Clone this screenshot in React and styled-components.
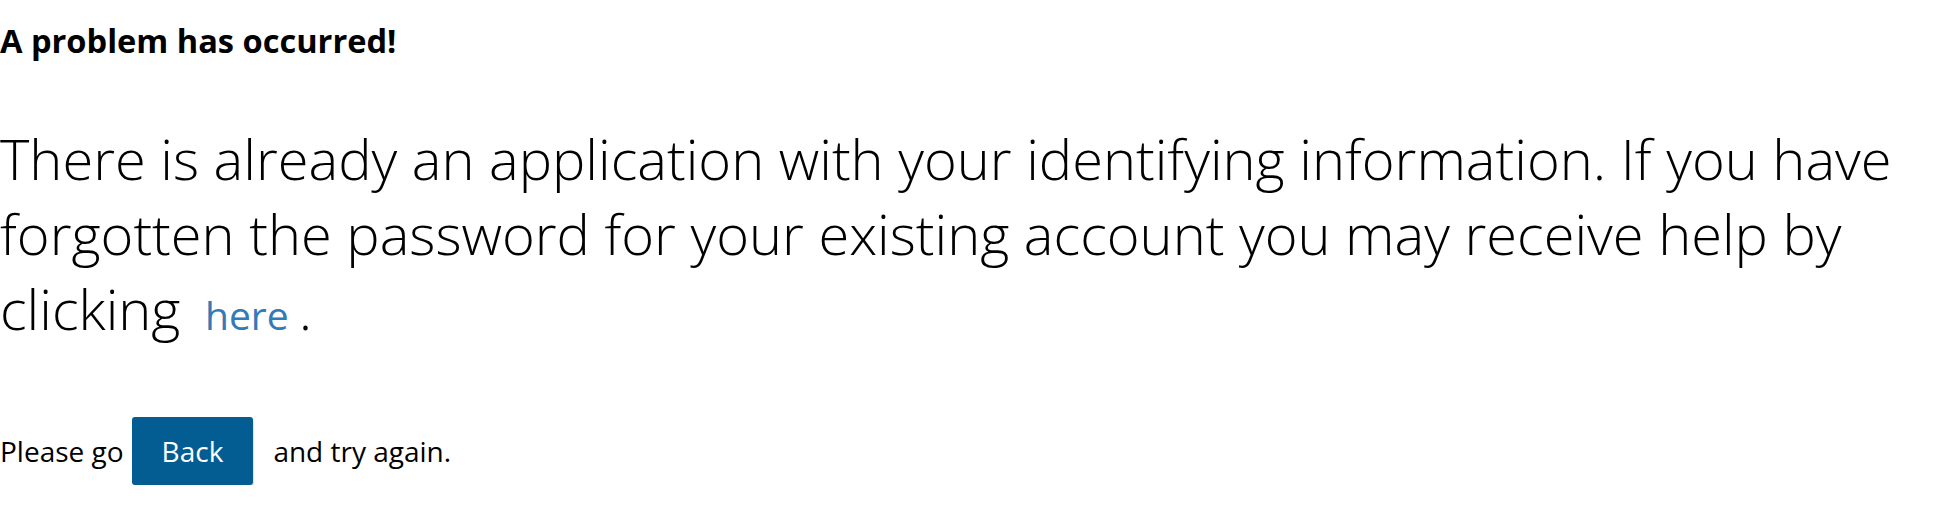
import React from 'react';
import styled, { createGlobalStyle } from 'styled-components';

const GlobalStyle = createGlobalStyle`
  html, body {
    margin: 0;
    padding: 0;
    background: #ffffff;
  }
  body {
    font-family: "Open Sans", "Liberation Sans", sans-serif;
    color: #000000;
  }
`;

const Page = styled.main`
  display: flex;
  flex-direction: column;
  align-items: flex-start;
  padding-top: 22px;
`;

const Title = styled.h2`
  margin: 0;
  font-size: 32.6px;
  line-height: 38px;
  font-weight: 700;
`;

const Message = styled.p`
  margin: 61px 0 0;
  max-width: 1930px;
  font-size: 56px;
  line-height: 75px;
  font-weight: 300;
`;

const HelpLink = styled.a`
  margin-left: 10px;
  font-size: 39px;
  font-weight: 400;
  color: #337ab7;
  text-decoration: none;
`;

const ActionRow = styled.div`
  display: flex;
  align-items: center;
  margin-top: 65px;
  font-size: 28px;
  line-height: 40px;
`;

const BackButton = styled.button`
  margin: 0 20px 0 8px;
  padding: 14px 30px;
  border: none;
  border-radius: 3px;
  background: #035d93;
  color: #ffffff;
  font-family: inherit;
  font-size: 28px;
  line-height: 40px;
  box-shadow: 1px 3px 0 #e4e4e6;
  cursor: pointer;
`;

export default function App() {
  return (
    <>
      <GlobalStyle />
      <Page>
        <Title>A problem has occurred!</Title>
        <Message>
          There is already an application with your identifying information. If you have
          forgotten the password for your existing account you may receive help by
          clicking <HelpLink href="#">here </HelpLink>.
        </Message>
        <ActionRow>
          <span>Please go</span>
          <BackButton type="button">Back</BackButton>
          <span>and try again.</span>
        </ActionRow>
      </Page>
    </>
  );
}
